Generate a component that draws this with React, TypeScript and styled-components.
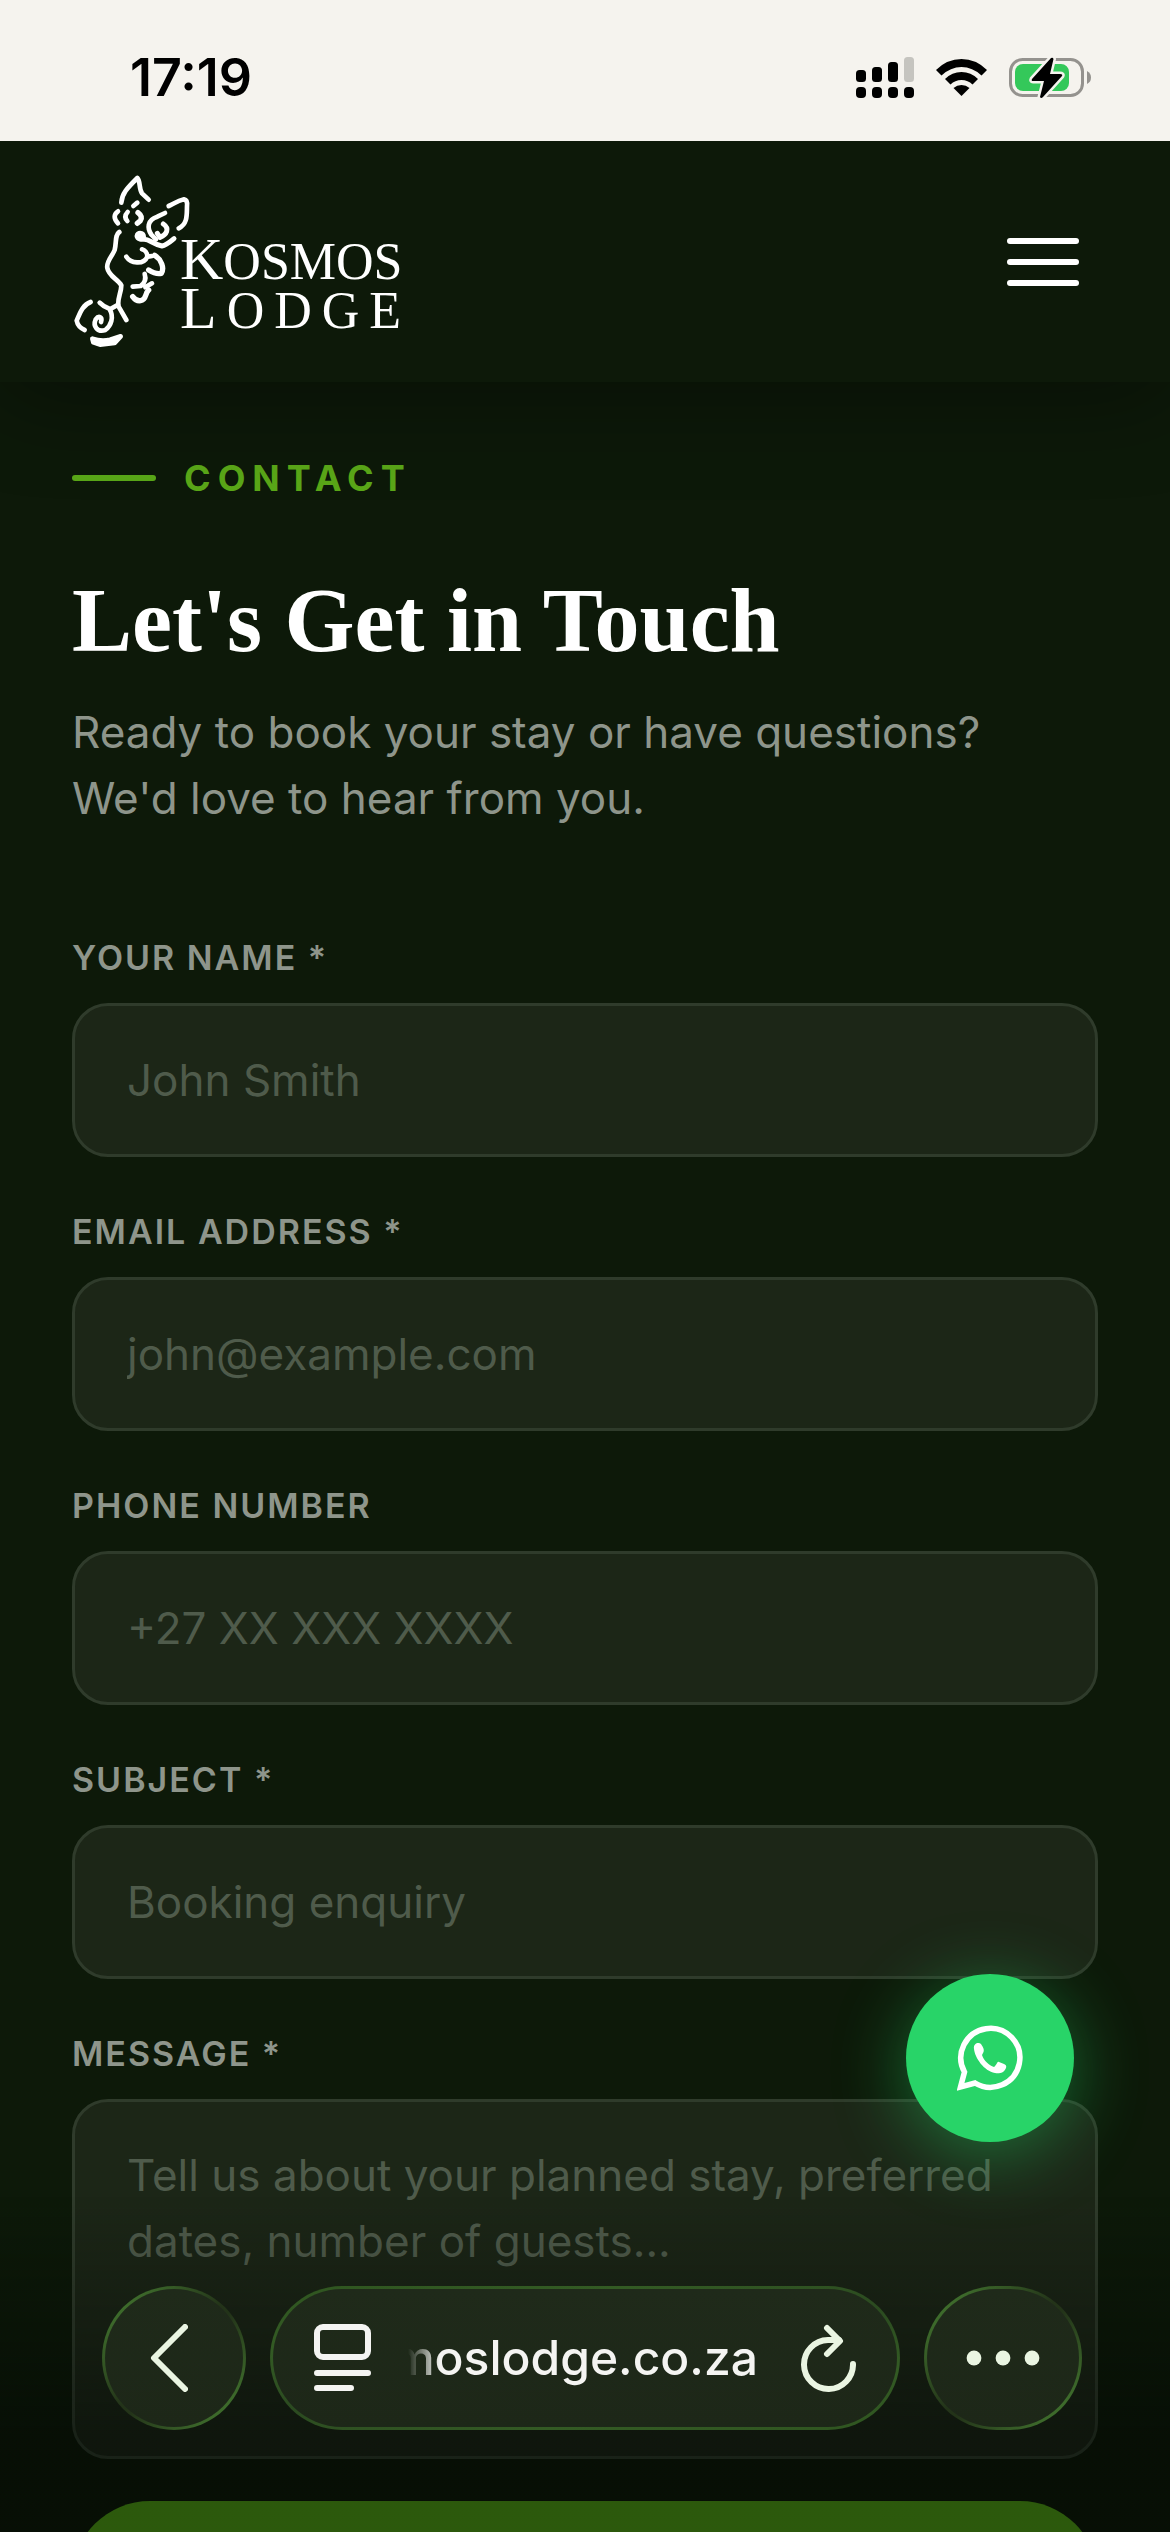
import React from "react";
import styled, { createGlobalStyle } from "styled-components";

const sans = `Inter, "Open Sans", sans-serif`;
const serif = `"Liberation Serif", serif`;

const GlobalStyle = createGlobalStyle`
  *, *::before, *::after { box-sizing: border-box; }
  body { margin: 0; background: #0d1909; font-family: ${sans}; }
  button, input, textarea { font-family: inherit; }
`;

const Screen = styled.div`
  height: 100vh;
  overflow: hidden;
  display: flex;
  flex-direction: column;
  background: #0d1909;
`;

const StatusBar = styled.div`
  flex: none;
  z-index: 2;
  height: 141px;
  padding: 14px 78px 0 130px;
  display: flex;
  align-items: center;
  justify-content: space-between;
  background: #f5f3ee;
  color: #000;
`;

const Clock = styled.time`
  font-size: 52px;
  line-height: 60px;
  font-weight: 600;
`;

const StatusIcons = styled.div`
  display: flex;
  align-items: center;
  gap: 22px;
  svg { display: block; }
`;

const Header = styled.header`
  flex: none;
  z-index: 1;
  height: 241px;
  padding: 0 72px;
  display: flex;
  align-items: center;
  justify-content: space-between;
  background: #0d1909;
  box-shadow: 0 12px 96px rgba(0, 0, 0, 0.4);
`;

const Logo = styled.a`
  display: flex;
  align-items: center;
  color: #fff;
  text-decoration: none;
  svg { display: block; }
`;

const LogoWords = styled.span`
  display: flex;
  flex-direction: column;
  padding-top: 46px;
  font-family: ${serif};
  font-size: 52px;
  line-height: 47px;
`;

const LogoWord = styled.span<{ $wide?: boolean }>`
  display: block;
  letter-spacing: ${(p) => (p.$wide ? "10px" : "0")};
  &::first-letter { font-size: 60px; line-height: 47px; }
`;

const MenuButton = styled.button`
  display: flex;
  flex-direction: column;
  gap: 15px;
  padding: 19px;
  border: 0;
  background: none;
`;

const MenuLine = styled.span`
  width: 72px;
  height: 6px;
  border-radius: 3px;
  background: #fff;
`;

const Main = styled.main`
  flex: none;
  padding: 69px 72px 0;
`;

const Eyebrow = styled.p`
  margin: 0 0 64px;
  display: flex;
  align-items: center;
  gap: 28px;
  color: #5aa718;
  font-size: 36px;
  line-height: 54px;
  font-weight: 700;
  letter-spacing: 7px;
  &::before {
    content: "";
    width: 84px;
    height: 6px;
    border-radius: 3px;
    background: #5aa718;
  }
`;

const Title = styled.h1`
  margin: 0 0 26px;
  color: #fff;
  font-family: ${serif};
  font-size: 90px;
  line-height: 104px;
  font-weight: 700;
`;

const Lead = styled.p`
  margin: 0 0 100px;
  color: #8e958b;
  font-size: 44px;
  line-height: 66px;
`;

const Form = styled.form`
  display: flex;
  flex-direction: column;
  gap: 42px;
`;

const Fields = styled.div`
  display: flex;
  flex-direction: column;
  gap: 48px;
`;

const Field = styled.div`
  display: flex;
  flex-direction: column;
  gap: 18px;
`;

const Label = styled.label`
  color: #8e958b;
  font-size: 34px;
  line-height: 54px;
  font-weight: 600;
  letter-spacing: 2px;
`;

const Input = styled.input`
  width: 100%;
  height: 154px;
  padding: 0 52px;
  border: 3px solid #2f3b2b;
  border-radius: 36px;
  background: #1c2617;
  color: #fff;
  font-size: 44px;
  &::placeholder { color: #4f5b4b; opacity: 1; }
`;

const Message = styled(Input).attrs({ as: "textarea" })`
  display: block;
  height: 360px;
  padding: 40px 52px;
  line-height: 66px;
  resize: none;
  overflow: hidden;
`;

const Submit = styled.button`
  height: 156px;
  border: 0;
  border-radius: 78px;
  background: #509f14;
`;

const Chat = styled.button`
  position: fixed;
  z-index: 2;
  right: 96px;
  bottom: 390px;
  width: 168px;
  height: 168px;
  padding: 0;
  display: grid;
  place-items: center;
  border: 0;
  border-radius: 50%;
  background: #28d468;
  box-shadow: 0 12px 72px rgba(37, 211, 102, 0.45);
`;

const BrowserBar = styled.nav`
  position: fixed;
  z-index: 3;
  left: 0;
  right: 0;
  bottom: 0;
  padding: 90px 88px 102px 102px;
  display: flex;
  gap: 24px;
  background: linear-gradient(rgba(0, 4, 2, 0), rgba(0, 4, 2, 0.45) 70%);
`;

const glass = `
  height: 144px;
  border: 3px solid transparent;
  border-radius: 72px;
  background:
    linear-gradient(#1f2a1a, #1d2718) padding-box,
    linear-gradient(135deg, #3d6a2b 15%, #233319 48%, #233319 54%, #3d6a2b 85%) border-box;
`;

const RoundButton = styled.button<{ $width: number; $nudge?: number }>`
  ${glass}
  flex: none;
  width: ${(p) => p.$width}px;
  padding: 0 ${(p) => p.$nudge ?? 0}px 0 0;
  display: grid;
  place-items: center;
`;

const AddressBar = styled.div`
  ${glass}
  flex: 1;
  min-width: 0;
  padding: 0 41px;
  display: flex;
  align-items: center;
  background:
    linear-gradient(#1f2a1a, #1d2718) padding-box,
    linear-gradient(170deg, #2f5520 0%, #335a24 25%, #2b4a20 50%, #335a24 75%, #2f5520 100%) border-box;
`;

const BarButton = styled.button`
  flex: none;
  padding: 0;
  border: 0;
  background: none;
  svg { display: block; }
`;

const Address = styled.button`
  flex: 1;
  min-width: 0;
  margin: 0 43px 0 37px;
  padding: 0;
  border: 0;
  overflow: hidden;
  display: flex;
  justify-content: flex-end;
  background: none;
  color: #f4f4f2;
  font-size: 48px;
  line-height: 64px;
  font-weight: 500;
  mask-image: linear-gradient(90deg, transparent, #000 32px);
`;

const Signal = () => (
  <svg width="58" height="42" viewBox="0 0 58 42" aria-hidden="true">
    <rect x="0" y="13" width="10" height="12" rx="3.5" />
    <rect x="16" y="10" width="10" height="15" rx="3.5" />
    <rect x="32" y="5" width="10" height="20" rx="3.5" />
    <rect x="48" y="0" width="10" height="25" rx="3.5" fill="#c5c4bf" />
    {[0, 16, 32, 48].map((x) => (
      <rect key={x} x={x} y="30" width="10" height="11" rx="4" />
    ))}
  </svg>
);

const Wifi = () => (
  <svg width="51" height="38" viewBox="0 0 51 38" aria-hidden="true">
    <path d="M0 11 Q11 0 25.500 0 Q40 0 51 11 L45.500 16.500 Q36.500 8 25.500 8 Q14.500 8 5.500 16.500Z" />
    <path d="M9 20 Q16 13 25.500 13 Q35 13 42 20 L36.500 25.500 Q32 21 25.500 21 Q19 21 14.500 25.500Z" />
    <path d="M17.500 29 Q21 26 25.500 26 Q30 26 33.500 29 L25.500 37Z" />
  </svg>
);

const Battery = () => (
  <svg width="83" height="42" viewBox="0 0 83 42" aria-hidden="true">
    <rect x="1.500" y="2.500" width="72" height="36" rx="12" fill="none" stroke="#94928e" strokeWidth="3" />
    <path d="M78 14 Q82 16 82 20.500 Q82 25 78 27Z" fill="#94928e" />
    <rect x="6" y="7" width="54" height="27" rx="8" fill="#34c85a" />
    <path
      d="M42 1 L23 22 Q22 24 24 24 L35 24 L31 40 Q32 42 34 40 L53 19 Q54 17 51 17 L41 17 L44.500 2 Q44 0 42 1Z"
      fill="#000"
      stroke="#f5f3ee"
      strokeWidth="5"
      paintOrder="stroke"
    />
  </svg>
);

const LogoMark = () => (
  <svg
    width="108"
    height="176"
    viewBox="36 40 324 528"
    overflow="visible"
    fill="none"
    stroke="#fff"
    strokeWidth="14"
    strokeLinecap="round"
    strokeLinejoin="round"
    aria-hidden="true"
  >
    <path d="M184 126 C186 98 200 84 232 52 C242 62 236 84 246 98 L266 117" />
    <path d="M220 136 L232 126 M174 152 Q154 166 174 188 M203 154 Q190 168 202 181" />
    <path d="M234 156 Q250 168 241 180 L232 188" strokeWidth="16" />
    <path d="M178 214 C164 224 170 244 164 268 C156 288 138 302 142 322 C146 346 174 356 184 374 C184 398 170 416 176 438 L199 478" />
    <path d="M240 226 L242 227" strokeWidth="32" />
    <path d="M250 236 C268 234 276 250 306 256 C320 254 330 244 342 234" strokeWidth="15" />
    <path d="M326 136 C340 130 352 120 372 116 Q383 118 381 136 C380 160 384 190 356 203" />
    <path d="M315 157 L292 168 C260 178 262 204 274 222 L288 236" />
    <path d="M310 190 C330 204 320 222 300 230 L292 218" strokeWidth="15" />
    <path d="M199 288 C212 308 250 314 262 288 C262 276 254 268 246 266 M264 288 L276 286" />
    <path d="M284 284 C304 296 314 322 304 338 Q288 342 266 328" strokeWidth="16" />
    <path d="M254 340 C258 352 256 366 242 376 L218 378 M276 368 L256 380" />
    <path d="M218 408 Q228 422 242 420 C260 418 254 398 266 388" strokeWidth="16" />
    <path d="M92 424 C66 434 60 458 50 480 Q54 500 74 508" />
    <path d="M119 426 Q130 438 148 444 C164 470 152 496 136 508 C112 516 98 496 107 476 C116 464 128 468 123 484 M150 446 L174 432" />
    <path d="M97 534 Q124 543 150 537 L182 527 L164 547 L120 552 L100 545Z" fill="#fff" />
  </svg>
);

const ChatIcon = () => (
  <svg width="66" height="66" viewBox="0 0 66 66" aria-hidden="true">
    <path
      d="M3.500 62 L7.500 47 A29.500 29.500 0 1 1 18 58 Z"
      fill="none"
      stroke="#fff"
      strokeWidth="5.500"
    />
    <path
      d="M17 24 C16 18 22 17 24 19 C26 22 28 25 26 28 L25 30 C27 36 32 40 37 42 C40 40 40 36 42 37 L47 39 Q50 40 49 43 C47 48 42 49 38 48 C27 46 18 33 17 24Z"
      fill="#fff"
    />
  </svg>
);

const BackIcon = () => (
  <svg width="38" height="68" viewBox="0 0 38 68" fill="none" stroke="#eaf5e2" strokeWidth="6" strokeLinecap="round" strokeLinejoin="round" aria-hidden="true">
    <path d="M35 3 L4 34 L35 65" />
  </svg>
);

const PageIcon = () => (
  <svg width="57" height="68" viewBox="0 0 57 68" fill="none" stroke="#f4f4f2" strokeWidth="6" strokeLinecap="round" aria-hidden="true">
    <rect x="3" y="3" width="51" height="30" rx="6" />
    <path d="M3 49 H54 M3 64 H37" />
  </svg>
);

const ReloadIcon = () => (
  <svg width="55" height="68" viewBox="0 0 55 68" fill="none" stroke="#eaf5e2" strokeWidth="6" strokeLinecap="round" strokeLinejoin="round" aria-hidden="true">
    <path d="M52 40 A24.500 24.500 0 1 1 27 16 H38" />
    <path d="M26 4 L39 17 L26 30" />
  </svg>
);

const MoreIcon = () => (
  <svg width="74" height="16" viewBox="0 0 74 16" fill="#eaf5e2" aria-hidden="true">
    <circle cx="8" cy="8" r="7.400" />
    <circle cx="37" cy="8" r="7.400" />
    <circle cx="66" cy="8" r="7.400" />
  </svg>
);

const fields = [
  { id: "name", type: "text", label: "YOUR NAME *", hint: "John Smith" },
  { id: "email", type: "email", label: "EMAIL ADDRESS *", hint: "john@example.com" },
  { id: "phone", type: "tel", label: "PHONE NUMBER", hint: "+27 XX XXX XXXX" },
  { id: "subject", type: "text", label: "SUBJECT *", hint: "Booking enquiry" },
];

export default function App() {
  return (
    <Screen>
      <GlobalStyle />
      <StatusBar>
        <Clock>17:19</Clock>
        <StatusIcons>
          <Signal />
          <Wifi />
          <Battery />
        </StatusIcons>
      </StatusBar>
      <Header>
        <Logo href="#">
          <LogoMark />
          <LogoWords>
            <LogoWord>KOSMOS</LogoWord>
            <LogoWord $wide>LODGE</LogoWord>
          </LogoWords>
        </Logo>
        <MenuButton type="button" aria-label="Open menu">
          <MenuLine />
          <MenuLine />
          <MenuLine />
        </MenuButton>
      </Header>
      <Main>
        <Eyebrow>CONTACT</Eyebrow>
        <Title>Let's Get in Touch</Title>
        <Lead>
          Ready to book your stay or have questions?
          <br />
          We'd love to hear from you.
        </Lead>
        <Form>
          <Fields>
            {fields.map((f) => (
              <Field key={f.id}>
                <Label htmlFor={f.id}>{f.label}</Label>
                <Input id={f.id} type={f.type} placeholder={f.hint} />
              </Field>
            ))}
            <Field>
              <Label htmlFor="message">MESSAGE *</Label>
              <Message
                id="message"
                placeholder="Tell us about your planned stay, preferred dates, number of guests..."
              />
            </Field>
          </Fields>
          <Submit type="submit" aria-label="Send message" />
        </Form>
      </Main>
      <Chat type="button" aria-label="Chat on WhatsApp">
        <ChatIcon />
      </Chat>
      <BrowserBar>
        <RoundButton type="button" $width={144} $nudge={10} aria-label="Back">
          <BackIcon />
        </RoundButton>
        <AddressBar>
          <BarButton type="button" aria-label="Page options">
            <PageIcon />
          </BarButton>
          <Address type="button">moslodge.co.za</Address>
          <BarButton type="button" aria-label="Reload">
            <ReloadIcon />
          </BarButton>
        </AddressBar>
        <RoundButton type="button" $width={158} aria-label="More">
          <MoreIcon />
        </RoundButton>
      </BrowserBar>
    </Screen>
  );
}
